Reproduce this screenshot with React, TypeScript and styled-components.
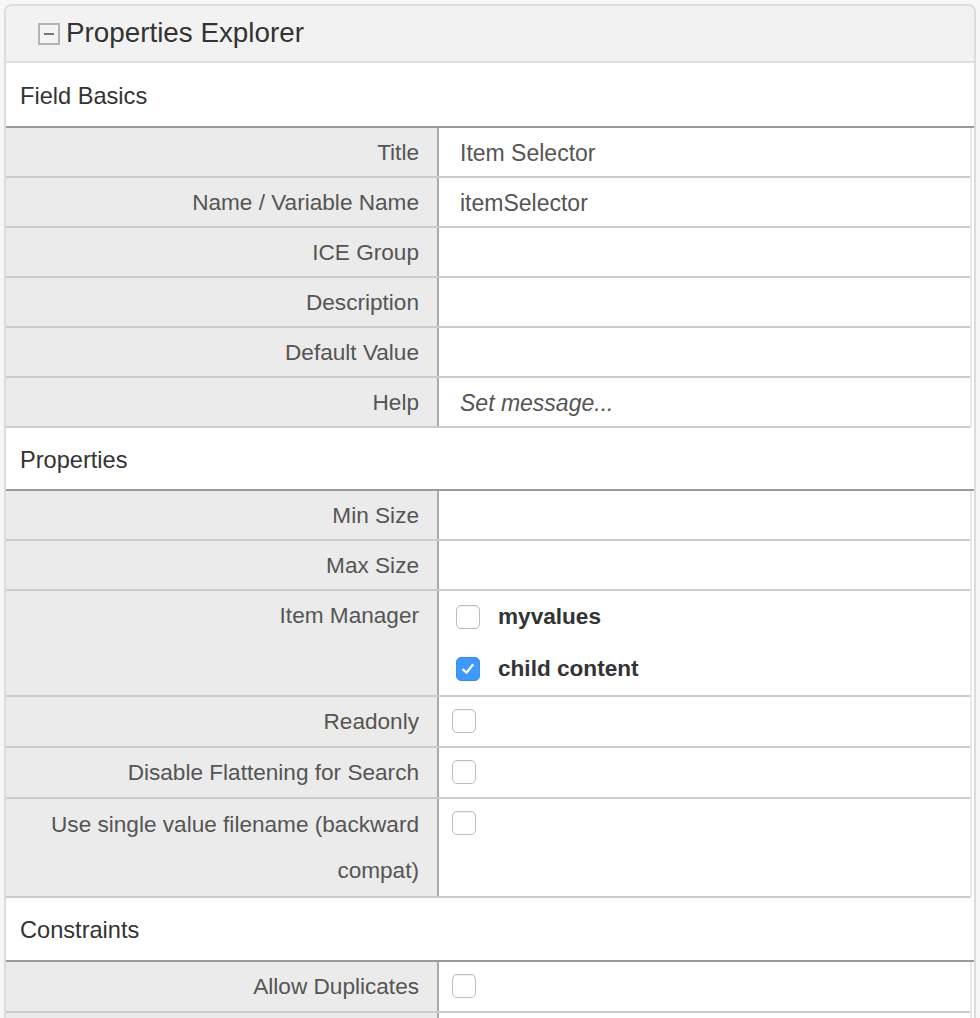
import React from "react";
import styled, { createGlobalStyle } from "styled-components";

const Global = createGlobalStyle`
  html, body { margin: 0; padding: 0; background: #f7f7f7; }
  body { padding: 4px 4px 0 4px; font-family: "Liberation Sans", Arial, Helvetica, sans-serif; }
  * { box-sizing: border-box; }
`;

const Panel = styled.div`
  border: 2px solid #dcdcdc;
  border-bottom: none;
  border-radius: 8px 8px 0 0;
  background: #fff;
  overflow: hidden;
`;

const Header = styled.div`
  height: 57px;
  display: flex;
  align-items: center;
  gap: 6px;
  padding-left: 32px;
  padding-bottom: 1px;
  background: #f2f2f2;
  border-bottom: 2px solid #dedede;
  color: #333;
  font-size: 27.8px;
`;

const Toggle = styled.span`
  width: 22px;
  height: 22px;
  border: 2px solid #b4b4b4;
  background: #f4f4f4;
  display: inline-flex;
  align-items: center;
  justify-content: center;
  margin-top: 1px;
  &::after {
    content: "";
    width: 10px;
    height: 2px;
    background: #777;
  }
`;

const Section = styled.div<{ $h: number }>`
  height: ${(p) => p.$h}px;
  padding: 3px 0 0 14px;
  display: flex;
  align-items: center;
  font-size: 23.6px;
  color: #333;
  background: #fff;
  border-bottom: 2px solid #9a9a9a;
`;

const Table = styled.div`
  margin-right: 2px;
  border-right: 2px solid #e8e8e8;
`;

const Row = styled.div`
  display: grid;
  grid-template-columns: 433px 1fr;
  border-bottom: 2px solid #cccccc;
`;

const Label = styled.div<{ $wrapped?: boolean }>`
  background: #ebebeb;
  border-right: 2px solid #a9a9a9;
  color: #555;
  font-size: 22.6px;
  line-height: 46px;
  min-height: 48px;
  padding: ${(p) => (p.$wrapped ? "3px 18px 2px 20px" : "2px 18px 0 20px")};
  text-align: right;
`;

const Value = styled.div<{ $italic?: boolean }>`
  color: #555;
  font-size: 23px;
  line-height: 46px;
  padding: 2px 21px 0;
  min-height: 48px;
  font-style: ${(p) => (p.$italic ? "italic" : "normal")};
`;

const CheckCell = styled.div`
  padding: 12px 0 0 13px;
  min-height: 49px;
`;

const OptionList = styled.div`
  padding: 0 0 0 17px;
  display: flex;
  flex-direction: column;
`;

const Option = styled.div`
  display: flex;
  align-items: center;
  gap: 18px;
  height: 52px;
  font-weight: bold;
  font-size: 22.6px;
  color: #333;
`;

const Box = styled.span<{ $checked?: boolean }>`
  width: 24px;
  height: 24px;
  border-radius: 5px;
  display: inline-flex;
  align-items: center;
  justify-content: center;
  flex: none;
  background: ${(p) => (p.$checked ? "#3d99fc" : "#fff")};
  border: 1px solid ${(p) => (p.$checked ? "#3a8ee8" : "#bdbdbd")};
  box-shadow: ${(p) => (p.$checked ? "none" : "inset 0 1px 1px rgba(0,0,0,0.06)")};
`;

const Check = ({ checked }: { checked?: boolean }) => (
  <Box $checked={checked}>
    {checked && (
      <svg width="16" height="16" viewBox="0 0 16 16">
        <path d="M3.2 8.6 L6.5 11.8 L12.8 3.8" fill="none" stroke="#fff" strokeWidth="2.2" strokeLinecap="round" strokeLinejoin="round" />
      </svg>
    )}
  </Box>
);

type Field = { label: string; value?: string; italic?: boolean; check?: boolean; wrapped?: boolean };

const TextRow = ({ f }: { f: Field }) => (
  <Row>
    <Label $wrapped={f.wrapped}>{f.label}</Label>
    {f.check ? (
      <CheckCell>
        <Check />
      </CheckCell>
    ) : (
      <Value $italic={f.italic}>{f.value}</Value>
    )}
  </Row>
);

const basics: Field[] = [
  { label: "Title", value: "Item Selector" },
  { label: "Name / Variable Name", value: "itemSelector" },
  { label: "ICE Group" },
  { label: "Description" },
  { label: "Default Value" },
  { label: "Help", value: "Set message...", italic: true },
];

export default function App() {
  return (
    <>
      <Global />
      <Panel>
        <Header>
          <Toggle />
          Properties Explorer
        </Header>
        <Section $h={65}>Field Basics</Section>
        <Table>
          {basics.map((f) => (
            <TextRow key={f.label} f={f} />
          ))}
        </Table>
        <Section $h={63}>Properties</Section>
        <Table>
          <TextRow f={{ label: "Min Size" }} />
          <TextRow f={{ label: "Max Size" }} />
          <Row>
            <Label>Item Manager</Label>
            <OptionList>
              <Option>
                <Check />
                myvalues
              </Option>
              <Option>
                <Check checked />
                child content
              </Option>
            </OptionList>
          </Row>
          <TextRow f={{ label: "Readonly", check: true }} />
          <TextRow f={{ label: "Disable Flattening for Search", check: true }} />
          <TextRow f={{ label: "Use single value filename (backward compat)", check: true, wrapped: true }} />
        </Table>
        <Section $h={64}>Constraints</Section>
        <Table>
          <TextRow f={{ label: "Allow Duplicates", check: true }} />
          <TextRow f={{ label: "" }} />
        </Table>
      </Panel>
    </>
  );
}
